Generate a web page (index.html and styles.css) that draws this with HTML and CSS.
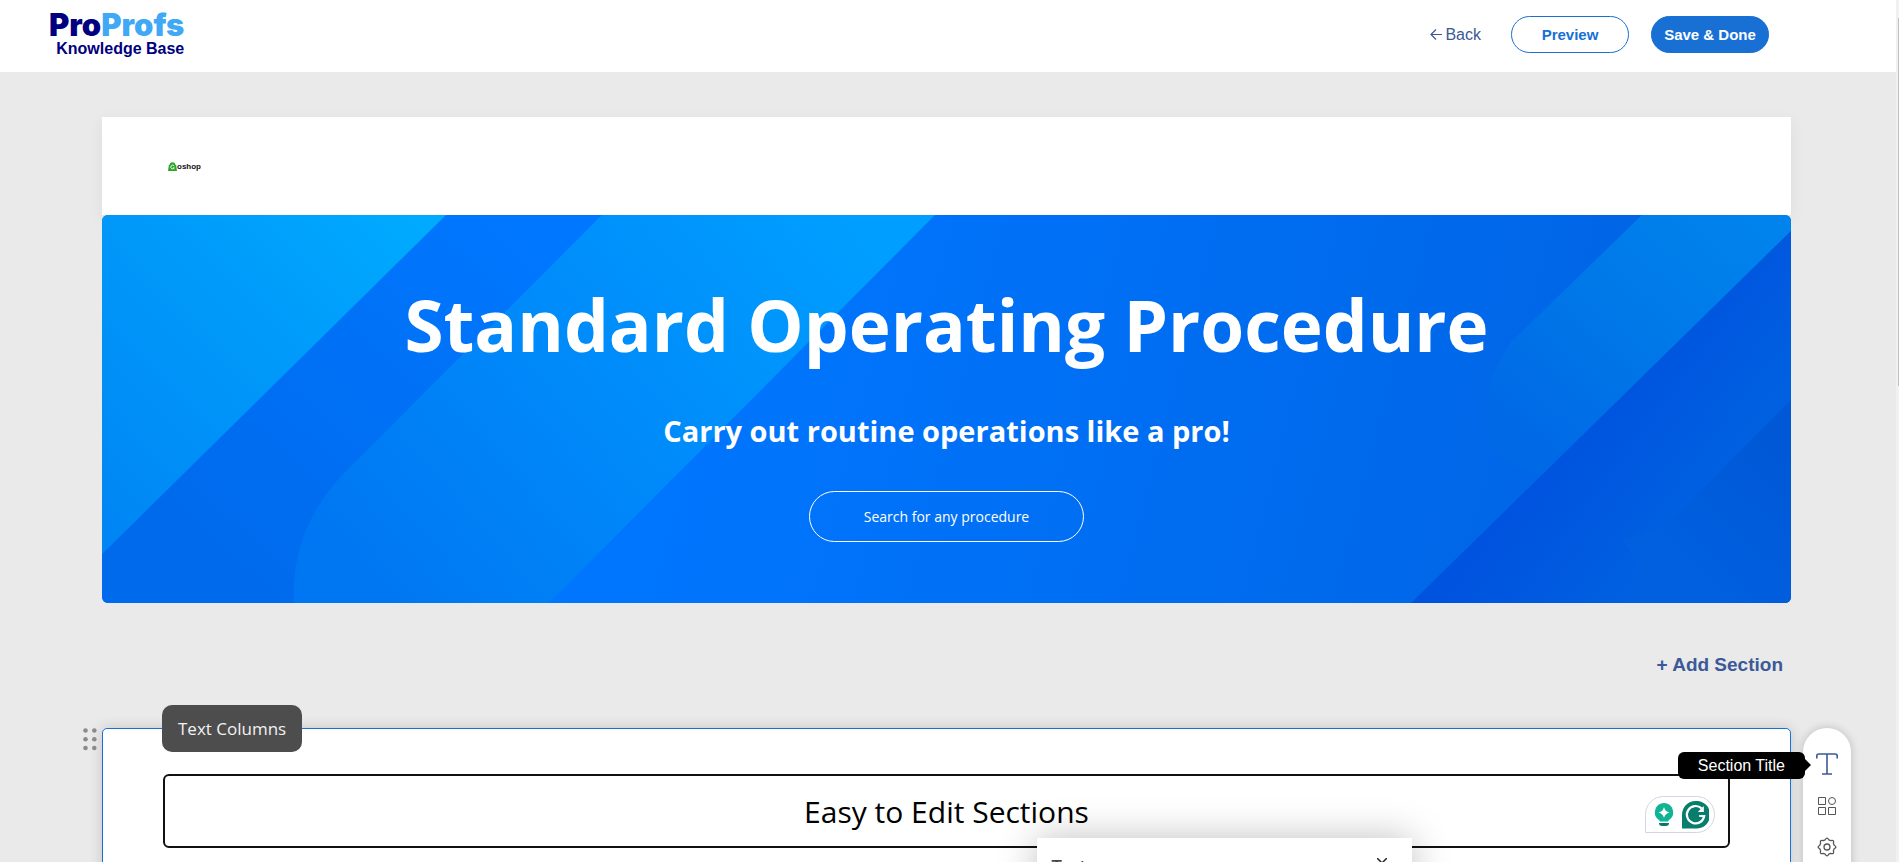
FILE: index.html
```
<!DOCTYPE html>
<html lang="en">

<head>
  <meta charset="UTF-8">
  <meta name="viewport" content="width=device-width, initial-scale=1.0">
  <title>ProProfs Knowledge Base</title>
  <link rel="stylesheet" href="styles.css">
</head>

<body>
  <header class="topbar">
    <a class="logo" href="#">
      <span class="logo-name">Pro<span class="logo-light">Profs</span></span>
      <span class="logo-product">Knowledge Base</span>
    </a>
    <div class="topbar-actions">
      <a class="back-link" href="#">
        <svg width="12" height="12" viewBox="0 0 12 12" fill="none" stroke="currentColor" stroke-width="1.200"><path d="M12 5.500H1M6 .5l-5 5 5 5" /></svg>
        Back
      </a>
      <button class="btn btn-outline" type="button">Preview</button>
      <button class="btn btn-solid" type="button">Save &amp; Done</button>
    </div>
  </header>

  <main class="editor">
    <div class="site-header">
      <a class="shop-logo" href="#">
        <svg width="9" height="9" viewBox="0 0 10 10">
          <path d="M1 3h1C2-.5 8-.5 8 3h1l1 7H0z" fill="#2ba52b" />
          <path d="M6.800 4.300a2.100 2.100 0 1 0 .3 2.200H5.400" fill="none" stroke="#fff" />
        </svg>oshop
      </a>
    </div>

    <section class="hero">
      <!-- diagonal stripes -->
      <svg class="hero-bg" viewBox="0 0 1689 388" preserveAspectRatio="none">
        <defs>
          <linearGradient id="base" gradientUnits="userSpaceOnUse" x1="500" y1="0" x2="1500" y2="260">
            <stop offset="0" stop-color="#0077ff" />
            <stop offset="0.300" stop-color="#0073fa" />
            <stop offset="1" stop-color="#0065e5" />
          </linearGradient>
          <linearGradient id="bottomShade" gradientUnits="userSpaceOnUse" x1="400" y1="0" x2="100" y2="330">
            <stop offset="0" stop-color="#006aec" stop-opacity="0" />
            <stop offset="1" stop-color="#006aec" />
          </linearGradient>
          <linearGradient id="stripeA" gradientUnits="userSpaceOnUse" x1="344" y1="0" x2="0" y2="339">
            <stop offset="0" stop-color="#00acff" />
            <stop offset="1" stop-color="#0084f4" />
          </linearGradient>
          <linearGradient id="stripeB" gradientUnits="userSpaceOnUse" x1="760" y1="0" x2="300" y2="400">
            <stop offset="0" stop-color="#009fff" />
            <stop offset="0.500" stop-color="#008bfa" />
            <stop offset="1" stop-color="#0077f2" />
          </linearGradient>
          <linearGradient id="stripeC" gradientUnits="userSpaceOnUse" x1="1640" y1="0" x2="1440" y2="240">
            <stop offset="0" stop-color="#0083ec" />
            <stop offset="0.500" stop-color="#0078e8" />
            <stop offset="1" stop-color="#0069e6" />
          </linearGradient>
          <linearGradient id="stripeD" gradientUnits="userSpaceOnUse" x1="1440" y1="250" x2="1560" y2="340">
            <stop offset="0" stop-color="#0053df" />
            <stop offset="1" stop-color="#0060e0" />
          </linearGradient>
          <linearGradient id="stripeE" gradientUnits="userSpaceOnUse" x1="1670" y1="220" x2="1560" y2="340">
            <stop offset="0" stop-color="#0058d6" />
            <stop offset="1" stop-color="#0060e0" />
          </linearGradient>
        </defs>
        <rect width="1689" height="388" fill="url(#base)" />
        <path d="M344 0H500L447 388H0V339z" fill="url(#bottomShade)" />
        <path d="M0 0H344L0 339z" fill="url(#stripeA)" />
        <path d="M500 0H833L447 388H192Q188 310 249 251z" fill="url(#stripeB)" />
        <path d="M1540 0H1689V16L1440 260Q1340 240 1408 128z" fill="url(#stripeC)" />
        <path d="M1689 16V388H1309z" fill="url(#stripeD)" />
        <path d="M1689 185V388H1560L1520 323Q1548 320 1570 305z" fill="url(#stripeE)" />
      </svg>
      <h1 class="hero-title">Standard Operating Procedure</h1>
      <h2 class="hero-subtitle">Carry out routine operations like a pro!</h2>
      <input class="hero-search" type="text" placeholder="Search for any procedure" aria-label="Search for any procedure">
    </section>

    <button class="add-section" type="button">+ Add Section</button>

    <section class="block">
      <span class="block-label">Text Columns</span>
      <svg class="drag-handle" width="14" height="23" viewBox="0 0 14 23" fill="#8b8b8b">
        <circle cx="2.500" cy="2.500" r="2.300" /><circle cx="11.300" cy="2.500" r="2.300" />
        <circle cx="2.500" cy="11.300" r="2.300" /><circle cx="11.300" cy="11.300" r="2.300" />
        <circle cx="2.500" cy="20" r="2.300" /><circle cx="11.300" cy="20" r="2.300" />
      </svg>

      <div class="title-field">
        <input class="title-input" type="text" value="Easy to Edit Sections" aria-label="Section title">
        <div class="writing-helper">
          <svg width="20" height="24" viewBox="0 0 20 24">
            <path d="M10 0a9.300 9.300 0 0 0-5 17l1 1.500h8L15 17A9.300 9.300 0 0 0 10 0z" fill="#0fb494" />
            <path d="M10 4q1 4.500 5.500 5.500Q11 10.500 10 15 9 10.500 4.500 9.500 9 8.500 10 4z" fill="#fff" />
            <path d="M5 20h10q0 3-3 3H8q-3 0-3-3z" fill="#067a68" />
          </svg>
          <svg width="27" height="28" viewBox="0 0 27 28">
            <path d="M13.500 0a13.500 13.800 0 1 1 0 27.500H0V13.800A13.500 13.800 0 0 1 13.500 0z" fill="#077d6d" />
            <path d="M19.600 7.400A8.700 8.700 0 1 0 22.200 15h-5" fill="none" stroke="#fff" stroke-width="2.200" />
            <path d="M21.800 5v6h-6z" fill="#fff" />
          </svg>
        </div>
      </div>

      <div class="side-tools">
        <span class="tooltip">Section Title</span>
        <button class="tool tool-active" type="button" aria-label="Section Title">
          <svg width="22" height="22" viewBox="0 0 22 22" fill="none" stroke="currentColor" stroke-width="1.600"><path d="M.8 5.500V3q0-2 2-2h16.400q2 0 2 2v2.500M11 1v20M6 21h10" /></svg>
        </button>
        <button class="tool" type="button" aria-label="Elements">
          <svg width="18" height="18" viewBox="0 0 18 18" fill="none" stroke="currentColor"><path d="M.5.500h7v7h-7zM.5 10.500h7v7h-7zM10.500 10.500h7v7h-7z" /><circle cx="14" cy="4" r="3.500" /></svg>
        </button>
        <button class="tool" type="button" aria-label="Settings">
          <svg width="20" height="20" viewBox="0 0 20 20" fill="none" stroke="currentColor" stroke-width="1.300" stroke-linejoin="round">
            <path d="M8.200 2.800Q10-.6 11.800 2.800L13.800 3.600Q17.500 2.500 16.400 6.200L17.200 8.200Q20.600 10 17.200 11.800L16.400 13.800Q17.500 17.500 13.800 16.400L11.800 17.200Q10 20.600 8.200 17.200L6.200 16.400Q2.500 17.500 3.600 13.800L2.800 11.800Q-.6 10 2.800 8.200L3.600 6.200Q2.500 2.500 6.200 3.600z" />
            <circle cx="10" cy="10" r="3" />
          </svg>
        </button>
      </div>
    </section>
  </main>

  <div class="popup">
    <strong class="popup-title">Text</strong>
    <button class="popup-close" type="button" aria-label="Close">
      <svg width="10" height="10" viewBox="0 0 10 10" stroke="currentColor" stroke-width="1.500"><path d="M0 0l10 10M10 0L0 10" /></svg>
    </button>
  </div>

  <div class="scroll-track">
    <div class="scroll-thumb"></div>
  </div>
</body>

</html>
```
FILE: styles.css
```
:root {
  --blue: #186fd4;
  --navy: #3b5998;
  --sans: "Liberation Sans", Arial, sans-serif;
  --ui: "Open Sans", "Segoe UI", sans-serif;
}

* {
  margin: 0;
  padding: 0;
  box-sizing: border-box;
}

body {
  height: 100vh;
  overflow: hidden;
  font-family: var(--sans);
  background: #eaeaea;
}

button,
input {
  font: inherit;
  border: none;
  background: none;
}

svg {
  display: block;
  flex: none;
}

a {
  text-decoration: none;
}

/* top bar */
.topbar {
  display: flex;
  justify-content: space-between;
  align-items: flex-start;
  height: 72px;
  padding: 8px 130px 0 49px;
  background: #fff;
}

.logo {
  display: flex;
  flex-direction: column;
  align-items: flex-end;
  color: #000080;
  font-weight: 700;
}

.logo-name {
  font-family: Inter, sans-serif;
  font-size: 31px;
  font-weight: 900;
  line-height: 34px;
}

.logo-light {
  color: #3fa9f5;
}

.logo-product {
  font-size: 16px;
  line-height: 14px;
}

.topbar-actions {
  display: flex;
  align-items: center;
  padding-top: 8px;
}

.back-link {
  display: flex;
  align-items: center;
  gap: 3px;
  margin-right: 30px;
  color: var(--navy);
  font-size: 16px;
}

.btn {
  width: 118px;
  height: 37px;
  border: 1px solid var(--blue);
  border-radius: 20px;
  font-size: 15px;
  font-weight: 700;
  cursor: pointer;
}

.btn-outline {
  margin-right: 22px;
  color: var(--blue);
}

.btn-solid {
  background: var(--blue);
  color: #fff;
}

/* page being edited */
.editor {
  display: flex;
  flex-direction: column;
  padding: 45px 108px 0 102px;
}

.site-header {
  display: flex;
  align-items: center;
  height: 98px;
  padding-left: 66px;
  background: #fff;
  box-shadow: 0 4px 16px rgba(0, 0, 0, 0.06);
}

.shop-logo {
  display: flex;
  align-items: center;
  color: #111;
  font-size: 8px;
  font-weight: 700;
}

.hero {
  position: relative;
  display: flex;
  flex-direction: column;
  align-items: center;
  height: 388px;
  padding-top: 60px;
  border-radius: 6px;
  overflow: hidden;
  color: #fff;
  font-family: var(--ui);
}

.hero-bg {
  position: absolute;
  inset: 0;
  width: 100%;
  height: 100%;
}

.hero-title,
.hero-subtitle,
.hero-search {
  position: relative;
}

.hero-title {
  font-size: 71px;
  line-height: 100px;
}

.hero-subtitle {
  margin-top: 36px;
  font-size: 29px;
  line-height: 40px;
}

.hero-search {
  width: 275px;
  height: 51px;
  margin-top: 40px;
  border: 1px solid #fff;
  border-radius: 26px;
  color: #fff;
  font-size: 14px;
  text-align: center;
}

.hero-search::placeholder {
  color: #fff;
  opacity: 1;
}

.add-section {
  align-self: flex-end;
  margin: 50px 8px 0 0;
  color: var(--navy);
  font-size: 19px;
  font-weight: 700;
  line-height: 24px;
  cursor: pointer;
}

/* editable block */
.block {
  position: relative;
  height: 240px;
  margin-top: 51px;
  padding: 45px 60px;
  border: 1px solid var(--blue);
  border-radius: 5px;
  background: #fff;
  box-shadow: 0 0 14px rgba(0, 0, 0, 0.16);
}

.block-label {
  position: absolute;
  top: -24px;
  left: 59px;
  padding: 0 16px;
  border-radius: 10px;
  background: #4d4d4d;
  color: #f2f2f2;
  font-family: var(--ui);
  font-size: 17px;
  line-height: 47px;
}

.drag-handle {
  position: absolute;
  top: -1px;
  left: -20px;
}

.title-field {
  display: flex;
  align-items: center;
  position: relative;
  height: 74px;
  border: 2px solid #111;
  border-radius: 6px;
}

.title-input {
  width: 100%;
  color: #000;
  font-family: var(--ui);
  font-size: 30px;
  text-align: center;
}

.writing-helper {
  position: absolute;
  top: 20px;
  right: 13px;
  display: flex;
  align-items: center;
  gap: 8px;
  height: 37px;
  padding: 0 5px 0 8px;
  border: 1px solid #d3d5e4;
  border-radius: 19px 19px 19px 0;
  background: #fff;
}

.side-tools {
  position: absolute;
  top: -1px;
  left: calc(100% + 13px);
  display: flex;
  flex-direction: column;
  align-items: center;
  gap: 22px;
  width: 48px;
  height: 240px;
  padding-top: 25px;
  border-radius: 24px;
  background: #fff;
  box-shadow: 0 0 10px rgba(0, 0, 0, 0.2);
}

.tool {
  display: flex;
  color: #555;
  cursor: pointer;
}

.tool-active {
  color: var(--navy);
}

.tooltip {
  position: absolute;
  top: 24px;
  right: 46px;
  padding: 0 20px;
  border-radius: 6px;
  background: #000;
  color: #fff;
  font-size: 16px;
  line-height: 27px;
  white-space: nowrap;
}

.tooltip::after {
  content: "";
  position: absolute;
  top: 7px;
  left: 100%;
  border: 6px solid transparent;
  border-left-color: #000;
}

.popup {
  position: fixed;
  top: 838px;
  left: calc(50% + 87px);
  display: flex;
  justify-content: space-between;
  align-items: flex-start;
  width: 375px;
  height: 200px;
  padding: 20px 25px 0 15px;
  background: #fff;
  box-shadow: 0 0 36px rgba(0, 0, 0, 0.25);
}

.popup-title {
  color: #444;
  font-size: 17px;
  line-height: 18px;
}

.popup-close {
  color: #222;
}

/* page scrollbar */
.scroll-track {
  position: fixed;
  top: 0;
  right: 0;
  bottom: 0;
  width: 3px;
  padding: 18px 0 0 2px;
  background: #f1f1f1;
}

.scroll-thumb {
  height: 368px;
  background: #c1c1c1;
}
```
